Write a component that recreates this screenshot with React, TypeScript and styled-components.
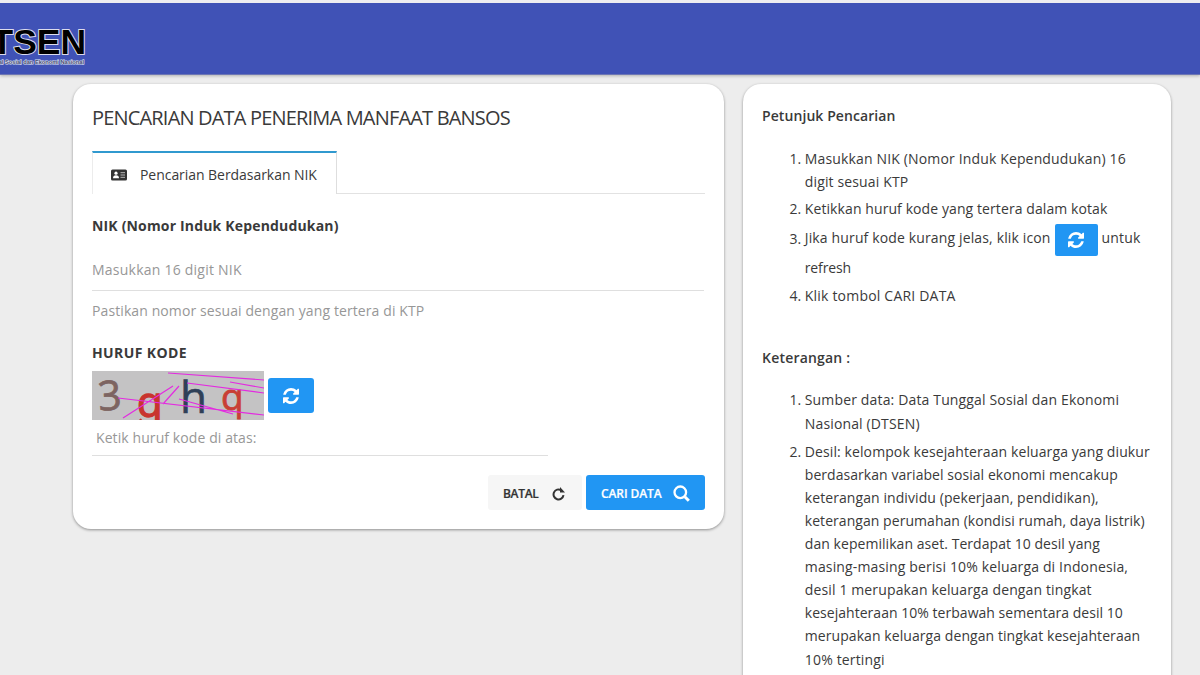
import React from "react";
import styled, { createGlobalStyle } from "styled-components";

const Global = createGlobalStyle`
  * { box-sizing: border-box; }
  body {
    margin: 0;
    background: #ededed;
    color: #3a3a3a;
    font-family: "Open Sans", "Noto Sans", sans-serif;
    font-size: 14px;
    overflow: hidden;
  }
`;

const Page = styled.div`
  display: flex;
  flex-direction: column;
  height: 675px;
  overflow: hidden;
  border-top: 3px solid #eeedf0;
`;

const Header = styled.header`
  height: 72px;
  flex: none;
  background: #4052b6;
  border-bottom: 1px solid #6d76b4;
  box-shadow: 0 1px 3px rgba(0, 0, 0, 0.25);
  overflow: hidden;
`;

const Columns = styled.main`
  display: flex;
  align-items: flex-start;
  gap: 19px;
  padding: 9px 29px 0 73px;
`;

const Card = styled.section<{ $width: number; $height: number; $pad: string }>`
  width: ${(p) => p.$width}px;
  height: ${(p) => p.$height}px;
  padding: ${(p) => p.$pad};
  flex: none;
  background: #fff;
  border-radius: 18px;
  box-shadow: 0 1px 3px rgba(0, 0, 0, 0.4);
`;

const Title = styled.h1`
  margin: 0;
  font-size: 20px;
  line-height: 26px;
  font-weight: 400;
  letter-spacing: -0.82px;
  white-space: nowrap;
`;

const Tabs = styled.div`
  display: flex;
  margin-top: 20px;
  height: 43px;
`;

const Tab = styled.div`
  display: flex;
  align-items: center;
  gap: 13px;
  width: 245px;
  padding-left: 18px;
  padding-top: 2px;
  border-top: 2px solid #3099cf;
  border-left: 1px solid #ececec;
  border-right: 1px solid #dedede;
  white-space: nowrap;
`;

const TabRule = styled.div`
  flex: 1;
  border-bottom: 1px solid #e2e2e2;
`;

const Label = styled.div<{ $top: number; $spacing: number }>`
  margin-top: ${(p) => p.$top}px;
  line-height: 20px;
  font-weight: 700;
  letter-spacing: ${(p) => p.$spacing}px;
  white-space: nowrap;
`;

const Field = styled.div<{ $width: number; $height: number; $indent: number; $lineHeight: number }>`
  width: ${(p) => p.$width}px;
  height: ${(p) => p.$height}px;
  padding-left: ${(p) => p.$indent}px;
  line-height: ${(p) => p.$lineHeight}px;
  border-bottom: 1px solid #dfdfdf;
  color: #979797;
  white-space: nowrap;
`;

const Hint = styled.div`
  margin-top: 10px;
  line-height: 20px;
  color: #979797;
  white-space: nowrap;
`;

const CaptchaRow = styled.div`
  display: flex;
  align-items: center;
  gap: 4px;
  margin-top: 8px;
  height: 49px;
`;

const IconButton = styled.span<{ $w: number; $h: number; $inline?: boolean }>`
  display: inline-flex;
  align-items: center;
  justify-content: center;
  width: ${(p) => p.$w}px;
  height: ${(p) => p.$h}px;
  margin: ${(p) => (p.$inline ? "1px 4px 0" : "0")};
  border-radius: ${(p) => (p.$inline ? 2 : 3)}px;
  background: #2196f3;
  color: #fff;
  vertical-align: middle;
`;

const Actions = styled.div`
  display: flex;
  justify-content: flex-end;
  gap: 4px;
  margin-top: 19px;
`;

const Button = styled.button<{ $primary?: boolean }>`
  display: flex;
  align-items: center;
  justify-content: space-between;
  width: ${(p) => (p.$primary ? 119 : 94)}px;
  height: 35px;
  padding: 1px ${(p) => (p.$primary ? 15 : 16)}px 0 15px;
  border: 0;
  border-radius: 3px;
  background: ${(p) => (p.$primary ? "#2196f3" : "#f6f6f6")};
  color: ${(p) => (p.$primary ? "#fff" : "#333")};
  font: 600 12px "Open Sans", sans-serif;
  letter-spacing: ${(p) => (p.$primary ? -0.1 : -0.3)}px;
  -webkit-text-stroke: 0.2px currentColor;
`;

const SideTitle = styled.h2<{ $top: number; $spacing: number }>`
  margin: ${(p) => p.$top}px 0 0;
  font-size: 14px;
  line-height: 20px;
  font-weight: 600;
  letter-spacing: ${(p) => p.$spacing}px;
  white-space: nowrap;
`;

const List = styled.ol<{ $top: number }>`
  margin: ${(p) => p.$top}px 0 0;
  padding: 0 0 0 42.8px;
  line-height: 23.1px;
  white-space: nowrap;
`;

const Item = styled.li<{ $gap?: number }>`
  margin-bottom: ${(p) => p.$gap ?? 5}px;
`;

const Line = styled.span<{ $ls?: number }>`
  letter-spacing: ${(p) => p.$ls ?? 0}px;
`;

const RefreshIcon = ({ size }: { size: number }) => (
  <svg width={size} height={size} viewBox="0 0 1536 1536" fill="currentColor">
    <path d="M1511 928q0 5-1 7-64 268-268 434.5t-478 166.5q-146 0-282.5-55t-243.5-157l-129 129q-19 19-45 19t-45-19-19-45v-448q0-26 19-45t45-19h448q26 0 45 19t19 45-19 45l-137 137q71 66 161 102t187 36q134 0 250-65t186-179q11-17 53-117 8-23 30-23h192q13 0 22.5 9.5t9.5 22.5zm25-800v448q0 26-19 45t-45 19h-448q-26 0-45-19t-19-45 19-45l138-138q-148-137-349-137-134 0-250 65t-186 179q-11 17-53 117-8 23-30 23h-199q-13 0-22.5-9.5t-9.5-22.5v-7q65-268 270-434.5t480-166.5q146 0 284 55.5t245 156.5l130-129q19-19 45-19t45 19 19 45z" />
  </svg>
);

const Logo = () => (
  <svg width="100" height="72" viewBox="0 3 100 72" fontFamily="Liberation Sans, sans-serif" fontWeight="700">
    <text x="-34" y="54" fontSize="35" textLength="120" lengthAdjust="spacingAndGlyphs" fill="#000" stroke="#dcdcec" strokeWidth="2" paintOrder="stroke">DTSEN</text>
    <text x="-32" y="63.5" fontSize="6" textLength="116" lengthAdjust="spacingAndGlyphs" fill="#444a70" stroke="#dfe1f2" strokeWidth="1.2" paintOrder="stroke">Data Tunggal Sosial dan Ekonomi Nasional</text>
  </svg>
);

const Captcha = () => (
  <svg width="172" height="49" viewBox="0 0 172 49" fontFamily="Open Sans, sans-serif">
    <rect width="172" height="49" fill="#c4c3c4" />
    <text x="6" y="39" fontSize="41" fill="#7d6461" stroke="#7d6461" strokeWidth=".8" transform="rotate(-4 17 24)">3</text>
    <text x="45" y="46" fontSize="42" fill="#c9342e" stroke="#c9342e" strokeWidth="1.4">q</text>
    <text x="88" y="42" fontSize="44" fill="#2e4057" stroke="#2e4057" strokeWidth=".6">h</text>
    <text x="129" y="39" fontSize="37" fill="#c93f35" stroke="#c93f35" strokeWidth=".8">q</text>
    <g stroke="#e32be0" strokeWidth="1.2" fill="none">
      <path d="M76 2 172 9M95 12 172 22M138 11 172 17M26 27 172 44M31 47 81 15M71 33 87 15M87 28 141 43" />
    </g>
    <path d="M47 49q2-3 3 0z" fill="#c9342e" />
  </svg>
);

export default function App() {
  return (
    <>
      <Global />
      <Page>
        <Header><Logo /></Header>
        <Columns>
          <Card $width={651} $height={445} $pad="21px 19px 0 19px">
            <Title>PENCARIAN DATA PENERIMA MANFAAT BANSOS</Title>
            <Tabs>
              <Tab>
                <svg width="16" height="12" viewBox="0 0 16 12">
                  <rect y=".5" width="16" height="11" rx="1.5" fill="#333" />
                  <circle cx="5" cy="4.2" r="1.6" fill="#fff" />
                  <path d="M2 9.2q0-3 3-3t3 3z" fill="#fff" />
                  <path d="M9.5 3.7H14M9.5 6H14M9.5 8.3H14" stroke="#bbb" strokeWidth="1" />
                </svg>
                <Line $ls={-0.05}>Pencarian Berdasarkan NIK</Line>
              </Tab>
              <TabRule />
            </Tabs>
            <Label $top={22} $spacing={0.17}>NIK (Nomor Induk Kependudukan)</Label>
            <Field $width={612} $height={55} $indent={0} $lineHeight={68}><Line $ls={0.23}>Masukkan 16 digit NIK</Line></Field>
            <Hint><Line $ls={0.1}>Pastikan nomor sesuai dengan yang tertera di KTP</Line></Hint>
            <Label $top={22} $spacing={0.4}>HURUF KODE</Label>
            <CaptchaRow>
              <Captcha />
              <IconButton $w={46} $h={35}><RefreshIcon size={16} /></IconButton>
            </CaptchaRow>
            <Field $width={456} $height={36} $indent={4} $lineHeight={36}><Line $ls={0.09}>Ketik huruf kode di atas:</Line></Field>
            <Actions>
              <Button>BATAL
                <svg width="14" height="16" viewBox="0 -2 14 16" fill="none" stroke="#333" strokeWidth="2"><path d="M11.5 8.2A5 5 0 1 1 9.2 3.2" /><path d="M8 0v5.5h5z" fill="#333" stroke="none" /></svg>
              </Button>
              <Button $primary>CARI DATA
                <svg width="17" height="17" viewBox="0 0 17 17" fill="none" stroke="#fff" strokeWidth="2.3"><circle cx="7.3" cy="7.3" r="5.8" /><path d="m11.8 11.8 4 4" strokeWidth="3" /></svg>
              </Button>
            </Actions>
          </Card>
          <Card $width={428} $height={640} $pad="22px 19px 0 19px">
            <SideTitle $top={0} $spacing={0.08}>Petunjuk Pencarian</SideTitle>
            <List $top={20.5}>
              <Item $gap={4}><Line $ls={0.15}>Masukkan NIK (Nomor Induk Kependudukan) 16</Line><br /><Line $ls={0.14}>digit sesuai KTP</Line></Item>
              <Item $gap={3.5}><Line $ls={0.09}>Ketikkan huruf kode yang tertera dalam kotak</Line></Item>
              <Item><Line $ls={0.14}>Jika huruf kode kurang jelas, klik icon</Line><IconButton $w={43} $h={32} $inline><RefreshIcon size={16} /></IconButton><Line $ls={0.15}>untuk</Line><br /><Line $ls={-0.15}>refresh</Line></Item>
              <Item $gap={0}><Line $ls={0.2}>Klik tombol CARI DATA</Line></Item>
            </List>
            <SideTitle $top={40.5} $spacing={0.2}>Keterangan :</SideTitle>
            <List $top={20.5}>
              <Item><Line $ls={0.15}>Sumber data: Data Tunggal Sosial dan Ekonomi</Line><br /><Line $ls={0.14}>Nasional (DTSEN)</Line></Item>
              <Item>
                <Line $ls={0.1}>Desil: kelompok kesejahteraan keluarga yang diukur</Line><br />
                <Line $ls={0.05}>berdasarkan variabel sosial ekonomi mencakup</Line><br />
                <Line $ls={0.08}>keterangan individu (pekerjaan, pendidikan),</Line><br />
                <Line $ls={0.05}>keterangan perumahan (kondisi rumah, daya listrik)</Line><br />
                <Line $ls={0.05}>dan kepemilikan aset. Terdapat 10 desil yang</Line><br />
                <Line $ls={0.15}>masing-masing berisi 10% keluarga di Indonesia,</Line><br />
                <Line $ls={0.13}>desil 1 merupakan keluarga dengan tingkat</Line><br />
                <Line $ls={0.03}>kesejahteraan 10% terbawah sementara desil 10</Line><br />
                <Line $ls={0.07}>merupakan keluarga dengan tingkat kesejahteraan</Line><br />
                <Line $ls={0.16}>10% tertingi</Line>
              </Item>
            </List>
          </Card>
        </Columns>
      </Page>
    </>
  );
}
